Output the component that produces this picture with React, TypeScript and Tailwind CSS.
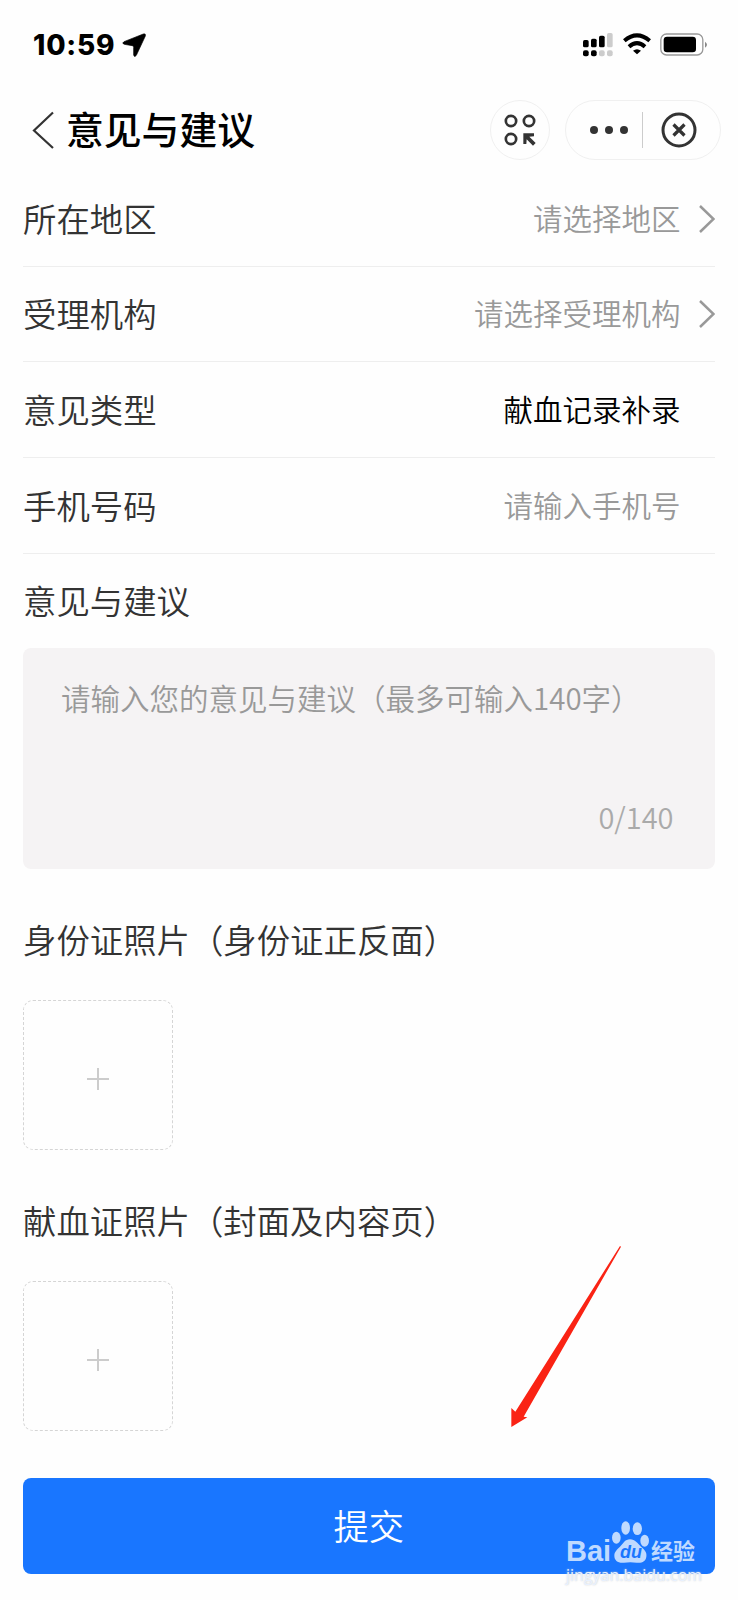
import { useState } from "react";

interface Field {
  label: string;
  text: string;
  filled?: boolean;
  arrow?: boolean;
}

const fields: Field[] = [
  { label: "所在地区", text: "请选择地区", arrow: true },
  { label: "受理机构", text: "请选择受理机构", arrow: true },
  { label: "意见类型", text: "献血记录补录", filled: true },
  { label: "手机号码", text: "请输入手机号" },
];

const StatusBar = () => (
  <div className="flex h-[90px] items-center justify-between pl-[33px] pr-[30px]">
    <div className="flex items-center gap-[7px]">
      <span className="font-['Inter'] text-[28px] leading-none font-extrabold tracking-[0.800px]">10:59</span>
      <svg className="h-6 w-6" viewBox="370 68 72 72">
        <path
          d="M434 71 L376 94 Q368 99 377 102 L401 106 Q405 107 405 111 L405 134 Q407 143 413 135 L440 77 Q442 69 434 71 Z"
          fill="#000"
          stroke="#000"
          strokeWidth="2"
        />
      </svg>
    </div>
    <div className="flex items-center">
      <svg className="h-6 w-[30px]" viewBox="372 68 90 72">
        <g fill="#000">
          <rect x="372" y="89" width="17" height="22" rx="5" />
          <rect x="396" y="85" width="17" height="26" rx="5" />
          <rect x="420" y="76" width="17" height="35" rx="5" />
          <rect x="372" y="120" width="17" height="18" rx="6" />
          <rect x="396" y="120" width="17" height="18" rx="6" />
        </g>
        <g fill="#ccc">
          <rect x="444" y="68" width="17" height="43" rx="5" />
          <rect x="420" y="120" width="17" height="18" rx="6" />
          <rect x="444" y="120" width="17" height="18" rx="6" />
        </g>
      </svg>
      <svg className="mb-[2px] ml-[10px] h-[22px] w-7" viewBox="492 68 84 66">
        <g fill="none" stroke="#000" strokeWidth="12">
          <path d="M496 91 Q534 59 572 91" />
          <path d="M510 109 Q534 88 558 109" />
        </g>
        <path d="M522 121 Q534 112 546 121 L534 132 Z" fill="#000" />
      </svg>
      <svg className="mb-px ml-[9px] h-6 w-12" viewBox="602 68 144 72">
        <rect x="604.500" y="71" width="126" height="63" rx="17" fill="#fff" stroke="#999" strokeWidth="4" />
        <rect x="613" y="79" width="97" height="47" rx="10" fill="#000" />
        <path d="M737 94 Q743 98 743 103 Q743 108 737 112 Z" fill="#888" />
      </svg>
    </div>
  </div>
);

const Header = ({ title }: { title: string }) => (
  <header className="flex h-[81px] items-center pr-[17px] pb-px pl-8">
    <svg className="h-[38px] w-[22px]" viewBox="0 0 22 38" fill="none" stroke="#333" strokeWidth="2.200">
      <path d="M21 1.500 L2 19.500 L21 37" />
    </svg>
    <h1 className="ml-3 pb-1 text-[37.800px] leading-none font-medium">{title}</h1>
    <button className="ml-auto flex h-[60px] w-[60px] items-center justify-center rounded-full border border-[#f0f0f0]">
      <svg className="h-8 w-8" viewBox="132 312 96 96">
        <g fill="none" stroke="#333" strokeWidth="8">
          <circle cx="153" cy="333" r="15.500" />
          <circle cx="207" cy="333" r="15.500" />
          <circle cx="153" cy="387" r="15.500" />
        </g>
        <path d="M190 370 L222 370 L222 379 L208 380 L227 399 L219 407 L200 388 L199 402 L190 402 Z" fill="#333" />
      </svg>
    </button>
    <div className="ml-[15px] flex h-[60px] w-[156px] items-center rounded-full border border-[#f0f0f0]">
      <svg className="ml-6 h-2 w-[38px]" viewBox="0 0 38 8" fill="#333">
        <circle cx="4" cy="4" r="4" />
        <circle cx="19" cy="4" r="4" />
        <circle cx="34" cy="4" r="4" />
      </svg>
      <div className="ml-[14px] h-9 w-px bg-[#ccc]" />
      <svg className="ml-[18px] h-9 w-9" viewBox="0 0 36 36" fill="none" stroke="#333">
        <circle cx="18" cy="18" r="16" strokeWidth="3" />
        <path d="M12.500 12.500 L23.500 23.500 M23.500 12.500 L12.500 23.500" strokeWidth="3.200" />
      </svg>
    </div>
  </header>
);

const Row = ({ label, text, filled, arrow }: Field) => (
  <div className="flex h-[95.670px] items-center border-b border-[#eee]">
    <span className="pb-[2px] text-[33.400px] leading-none">{label}</span>
    <span className={`ml-auto pb-[2px] text-[29.500px] leading-none ${filled ? "text-black" : "text-[#999]"}`}>
      {text}
    </span>
    <div className="w-[34px]">
      {arrow && (
        <svg className="mt-px ml-[18px] h-7 w-4" viewBox="0 0 16 28" fill="none" stroke="#999" strokeWidth="2.500">
          <path d="M1 1 L14.500 14 L1 27" />
        </svg>
      )}
    </div>
  </div>
);

const Upload = ({ label }: { label: string }) => (
  <section>
    <h2 className="flex h-12 items-center text-[33.400px] leading-none">{label}</h2>
    <button className="mt-[37px] flex h-[150px] w-[150px] items-center justify-center rounded-[10px] border border-dashed border-[#d5d5d5] pt-2">
      <svg className="h-[22px] w-[22px]" viewBox="0 0 22 22" stroke="#ccc" strokeWidth="2">
        <path d="M0 11 H22 M11 0 V22" />
      </svg>
    </button>
  </section>
);

const Watermark = () => (
  <div className="absolute top-[1519px] left-[566px] h-[72px] w-[140px] text-[#bfdaff]">
    <span className="absolute top-[18px] left-0 font-['Liberation_Sans'] text-[29px] leading-none font-bold">Bai</span>
    <svg className="absolute top-[1px] left-[45px] h-[45px] w-[38px]" viewBox="213 178 114 135" fill="currentColor">
      <ellipse cx="229" cy="231" rx="13" ry="18" />
      <ellipse cx="257" cy="202" rx="13" ry="20" />
      <ellipse cx="292" cy="204" rx="14" ry="19" />
      <ellipse cx="314" cy="240" rx="13" ry="18" />
      <path d="M270 236 C286 236 292 248 303 258 C316 268 321 277 319 288 C317 302 306 308 290 306 Q271 303 252 306 C234 308 223 299 223 285 C223 273 231 267 240 258 C251 247 255 236 270 236 Z" />
    </svg>
    <span className="absolute top-[24px] left-[54px] font-['Liberation_Sans'] text-[18px] leading-none font-bold text-[#1976ff] italic">
      du
    </span>
    <span className="absolute top-[19px] left-[85px] text-[22px] leading-none font-bold">经验</span>
    <span className="absolute top-[48px] left-0 font-['Open_Sans'] text-[16px] leading-none font-normal text-[#e8f1ff] [text-shadow:0_0_2px_#cccccc]">
      jingyan.baidu.com
    </span>
  </div>
);

const App = () => {
  const [content, setContent] = useState("");

  return (
    <div className="relative h-[1600px] w-[738px] overflow-hidden bg-[#fefefe] font-['Noto_Sans_CJK_SC',sans-serif] font-[350] text-[#333]">
      <div className="text-black">
        <StatusBar />
        <Header title="意见与建议" />
      </div>

      <main className="pr-[23.500px] pl-[23px]">
        {fields.map((field) => (
          <Row key={field.label} {...field} />
        ))}

        <h2 className="flex h-[94px] items-center pb-px text-[33.400px] leading-none">意见与建议</h2>
        <div className="flex h-[221px] flex-col rounded-lg bg-[#f5f3f4] pr-[41px] pb-[35px] pl-[38px]">
          <textarea
            className="mt-[29px] h-[100px] w-full resize-none text-[29.500px] leading-10 outline-none placeholder:text-[#999]"
            placeholder="请输入您的意见与建议（最多可输入140字）"
            maxLength={140}
            value={content}
            onChange={(e) => setContent(e.target.value)}
          />
          <span className="mt-auto text-right text-[29px] leading-9 text-[#aaa]">{content.length}/140</span>
        </div>

        <div className="mt-[46px] flex flex-col gap-[46px]">
          <Upload label="身份证照片（身份证正反面）" />
          <Upload label="献血证照片（封面及内容页）" />
        </div>

        <button className="mt-[47px] flex h-24 w-full items-center justify-center rounded-lg bg-[#1976ff] pb-px text-[35.300px] leading-none text-white">
          提交
        </button>
      </main>

      {/* Pointer to the submit button */}
      <svg className="absolute top-[1245px] left-[511px] h-[184px] w-[112px]" viewBox="93 45 336 552" fill="#fa2314">
        <path d="M420 48 L423 50 L131 560 L142 562 L94 591 L94 534 L106 545 Z" />
      </svg>
      <Watermark />
    </div>
  );
};

export default App;
